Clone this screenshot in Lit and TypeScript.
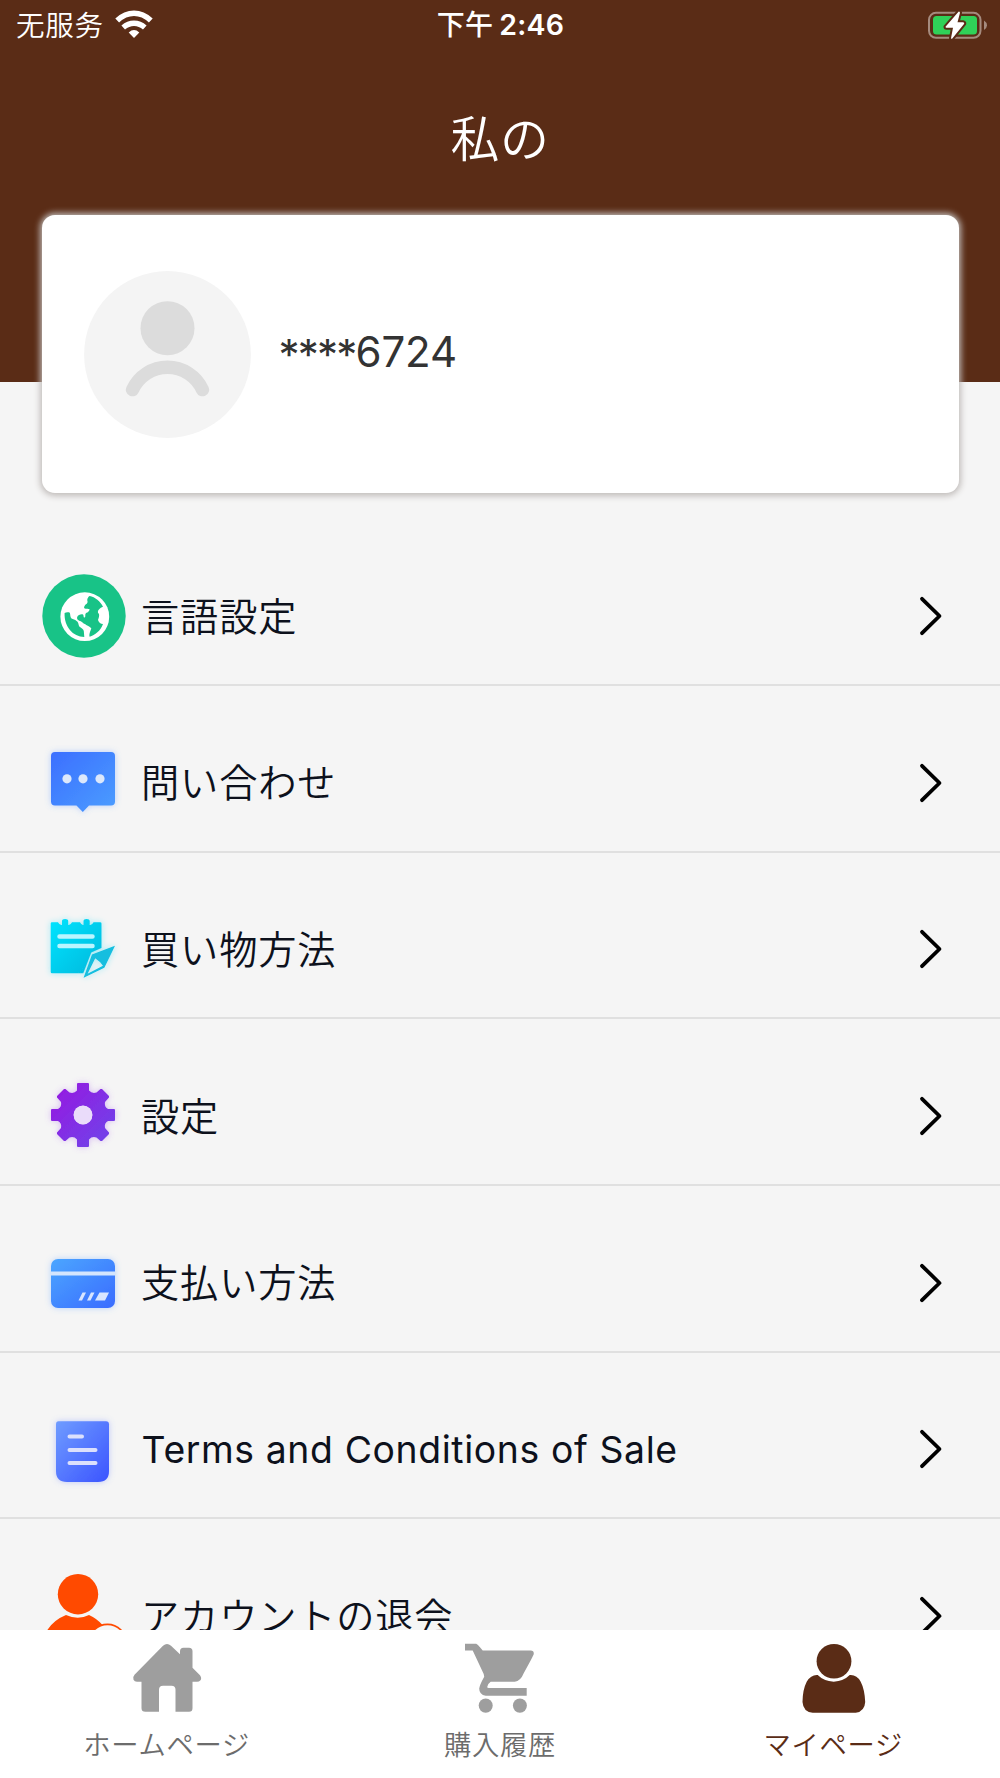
import { LitElement, html, css, svg } from "lit";
import { customElement, property } from "lit/decorators.js";

const glow = (id: string, color: string) => svg`
  <filter id=${id} x="-30%" y="-30%" width="160%" height="160%">
    <feDropShadow dx="0" dy="0" stdDeviation="3.2" flood-color=${color} flood-opacity="0.4"></feDropShadow>
  </filter>`;

const gradient = (id: string, from: string, to: string) => svg`
  <linearGradient id=${id} x1="0" y1="0" x2="1" y2="1">
    <stop offset="0" stop-color=${from}></stop>
    <stop offset="1" stop-color=${to}></stop>
  </linearGradient>`;

/* Row icons share an 84 x 84 box. */
const icons: Record<string, unknown> = {
  globe: svg`
    <circle cx="42" cy="42" r="41.700" fill="#18c387"></circle>
    <circle cx="42.800" cy="42.700" r="24.400" fill="#fff"></circle>
    <path fill="#18c387" d="M47.600 22 C53 23 58.500 27.500 61 32.700 C58 34 55.500 36 56 38.700 C58 40.500 57 43 56 46 C57 48.500 58.500 50 61 50 C58.500 57 53 61 47.600 62.700 C47 60 48 58.500 49.300 54.300 C47.500 52 45 52 43.300 50.300 C41 49.500 39.500 47 37.200 46.700 C35.500 46 34.600 44.500 35.200 43 C36 41 39 39.800 41 40.500 C42 41.500 41 44 42.800 43.500 C44 42.500 42.500 40.500 44 39 C46 38.500 47.500 37 47.600 35.300 C45.500 33.800 43.500 35.500 42.300 34.300 C41.500 33 43 31.500 43.600 30.500 C45.500 30 46 28 45.200 26 C45.500 24 46.500 22.500 47.600 22Z"></path>
    <path fill="#18c387" d="M22.600 39 C24 38.200 26.500 38 27.800 38.800 C28.500 41 28 43 29.500 44.500 C31 45.500 33 45.500 34.500 47 C37 48.500 36 50.500 37.600 52.700 C39.500 54 41.500 55 41.800 57 L42.300 63 C31 62.800 22 52.500 22.600 39Z"></path>`,
  chat: svg`
    <defs>${gradient("g-chat", "#3c6fff", "#4a9dff")}${glow("f-chat", "#5a92ff")}</defs>
    <path filter="url(#f-chat)" fill="url(#g-chat)" d="M13 11 H69 Q73 11 73 15 V60.500 Q73 64.500 69 64.500 H47 L40.800 71 L34.500 64.500 H13 Q9 64.500 9 60.500 V15 Q9 11 13 11Z"></path>
    <g fill="#dce8fb"><circle cx="25" cy="37.800" r="4.600"></circle><circle cx="41" cy="37.800" r="4.600"></circle><circle cx="58" cy="37.800" r="4.600"></circle></g>`,
  note: svg`
    <defs>${gradient("g-note", "#00e4ff", "#08b8dc")}${glow("f-note", "#20d8f5")}</defs>
    <g filter="url(#f-note)">
      <path fill="url(#g-note)" d="M10 15.300 H16 Q17.500 18.500 20 18 V14 Q20 12 23.100 12 Q26.200 12 26.200 14 V18 Q28.500 18.500 30 15.300 H38 Q39.500 18.500 41.500 18 V14 Q41.500 12 44.600 12 Q47.700 12 47.700 14 V18 Q50 18.500 51.500 15.300 H58.300 Q59.500 15.300 59.500 16.500 V41 L49.300 45.500 L41.300 66.300 H10 Q8.700 66.300 8.700 65 V16.500 Q8.700 15.300 10 15.300Z"></path>
      <path fill="#12bedf" fill-rule="evenodd" d="M73 38.700 L62.300 60.700 L41.600 70.700 L50 47.500Z M53.200 51.300 L53.200 51.300 L45.600 66.700 L61 58.800 L58 55Z"></path>
    </g>
    <path stroke="#baf5ff" stroke-width="4.500" stroke-linecap="round" d="M17.500 29.600 H50.500 M17.500 39 H50.500"></path>`,
  gear: svg`
    <defs>${gradient("g-gear", "#9817e0", "#6c46ea")}${glow("f-gear", "#a860ee")}</defs>
    <path filter="url(#f-gear)" fill="url(#g-gear)" fill-rule="evenodd" d="M36 9 H46 Q47 9 47 10 V16.500 Q50 20 54.500 18.500 L58.500 15 L60 15 L67 22 L67 23.500 L63 28 Q62 33 66 35 H72 Q73 35 73 36 V46 Q73 47 72 47 H66 Q62 49 63 54 L67 58.500 V60 L60 67 H58.500 L54.500 63.500 Q50 62 47 65.500 V72 Q47 73 46 73 H36 Q35 73 35 72 V65.500 Q32 62 27.500 63.500 L23.500 67 H22 L15 60 V58.500 L19 54 Q20 49 16 47 H10 Q9 47 9 46 V36 Q9 35 10 35 H16 Q20 33 19 28 L15 23.500 V22 L22 15 H23.500 L27.500 18.500 Q32 20 35 16.500 V10 Q35 9 36 9Z M41 31.700 A9.300 9.300 0 1 0 41 50.300 A9.300 9.300 0 1 0 41 31.700Z"></path>
    <circle cx="41" cy="41" r="9.400" fill="#eadcfa"></circle>`,
  card: svg`
    <defs>${gradient("g-card", "#4ba6ff", "#3a6cff")}${glow("f-card", "#5a9cff")}</defs>
    <rect filter="url(#f-card)" x="9" y="18" width="64" height="49" rx="7" fill="url(#g-card)"></rect>
    <rect x="9" y="30.500" width="64" height="4" fill="#d4e5fd"></rect>
    <path fill="#d8e5ff" d="M40.500 51.500 H44 L40 59.500 H36.500Z M49 51.500 H52.500 L48.500 59.500 H45Z M57.500 51.500 H67 L63 59.500 H53Z"></path>`,
  doc: svg`
    <defs>${gradient("g-doc", "#6f9cff", "#3b54ff")}${glow("f-doc", "#6680ff")}</defs>
    <path filter="url(#f-doc)" fill="url(#g-doc)" d="M16.500 14.200 H64 Q67 14.200 67 17.200 V64 Q67 75 56 75 H25 Q14 75 14 64 V17.200 Q14 14.200 16.500 14.200Z"></path>
    <path stroke="#dbe0fc" stroke-width="4" stroke-linecap="round" d="M27.500 29.600 H40 M27.500 43 H53.500 M27.500 56 H53.500"></path>`,
  leave: svg`
    <circle cx="36" cy="20.200" r="20.200" fill="#ff4a00"></circle>
    <path fill="#ff4a00" d="M2 62.500 Q8 47.500 24 41 Q36 46.500 47 41 Q55 44.500 61 51.500 L57 66 H2Z"></path>
    <circle cx="65.500" cy="69" r="18.700" fill="#f5f5f5" stroke="#ff4a00" stroke-width="1.700"></circle>`,
};

const rows = [
  { icon: "globe", label: "言語設定" },
  { icon: "chat", label: "問い合わせ" },
  { icon: "note", label: "買い物方法" },
  { icon: "gear", label: "設定" },
  { icon: "card", label: "支払い方法" },
  { icon: "doc", label: "Terms and Conditions of Sale", latin: true },
  { icon: "leave", label: "アカウントの退会" },
];

const tabs = [
  {
    label: "ホームページ",
    active: false,
    box: "0 1.7 76 74",
    icon: svg`<path d="M34 5.500 Q38 2 42 5.500 L51 14 V11 Q51 7.500 54.500 7.500 H60 Q63.500 7.500 63.500 11 V27.500 L71 35 Q73 38 71.500 40 Q70 41.500 68 41.500 H63.500 V68 Q63.500 71.500 60 71.500 H46.500 V49.500 Q46.500 45.500 42.500 45.500 H34 Q30 45.500 30 49.500 V71.500 H16.500 Q12.500 71.500 12.500 68 V41.500 H8 Q5.500 41.500 4.500 39.500 Q3.300 37 5.500 34.500Z"></path>`,
  },
  {
    label: "購入履歴",
    active: false,
    box: "0.3 1.5 76 82",
    icon: svg`<path fill-rule="evenodd" d="M3.300 3.500 H14.500 Q16 4 18.500 7.500 L21 11 H69 Q72.500 11 72 15 Q71.500 17 62 36 Q59 44.500 53 45.500 H29 Q26 47.500 25.500 51.500 Q25.500 52.600 27 52.600 H65 V61 H24 Q17.500 60 17.500 53 Q18 49 22.500 40 L22 37 L11 11 H3.300Z"></path><ellipse cx="24" cy="72" rx="7" ry="8"></ellipse><ellipse cx="58.200" cy="72" rx="7" ry="8"></ellipse>`,
  },
  {
    label: "マイページ",
    active: true,
    box: "-0.7 1.5 76 82",
    icon: svg`<ellipse cx="38.300" cy="22.800" rx="17.400" ry="19.200"></ellipse><path d="M22 38.200 Q28 45 38 45.500 Q48 45 54 38.200 Q61 37.500 65 45.500 Q69 54 69.500 68 Q69 78.500 60 80 H17 Q7.500 79 6.800 68 Q7 54 11 45.500 Q15.500 37.500 22 38.200Z"></path>`,
  },
];

@customElement("status-bar")
export class StatusBar extends LitElement {
  static styles = css`
    :host { display: grid; grid-template-columns: 1fr auto 1fr; align-items: center; height: 50px; padding: 0 13px 0 16px; color: #fff; font: 400 28px/50px Inter, "Noto Sans CJK SC", sans-serif; }
    .carrier { display: flex; align-items: center; gap: 11px; }
    .carrier-name { font-size: 28.600px; font-weight: 350; letter-spacing: 0.700px; }
    .wifi { width: 38px; height: 28px; margin-bottom: 3px; fill: none; stroke: #fff; }
    .time { display: flex; gap: 6px; margin: 0 2px 1px 0; font-size: 28.500px; font-weight: 600; letter-spacing: 0.200px; }
    .period { font-size: 28px; font-weight: 500; }
    .battery { justify-self: end; width: 60px; height: 30px; }
  `;
  render() {
    return html`
      <div class="carrier">
        <span class="carrier-name">无服务</span>
        <svg class="wifi" viewBox="0 0 38 28">
          <path stroke-width="5.600" d="M2.200 10.500 Q10 3.300 19 3.300 Q28 3.300 35.800 10.500"></path>
          <path stroke-width="5.400" d="M8.200 17.500 Q13 13.200 19 13.200 Q25 13.200 29.800 17.500"></path>
          <path fill="#fff" stroke="none" d="M13.700 22.500 Q19 17.700 24.300 22.500 L19 28Z"></path>
        </svg>
      </div>
      <div class="time"><span class="period">下午</span><span>2:46</span></div>
      <svg class="battery" viewBox="0 0 60 30">
        <rect x="2" y="1.800" width="51.500" height="25" rx="7" fill="none" stroke="#a58b7e" stroke-width="2"></rect>
        <path fill="#a58b7e" d="M57 9.600 Q60 11.600 60 14.300 Q60 17.100 57 19.100Z"></path>
        <rect x="6" y="5.100" width="44" height="18.300" rx="3.500" fill="#30d158"></rect>
        <path fill="#fff" stroke="#5a2c16" stroke-width="4" stroke-linejoin="round" paint-order="stroke" d="M31.500 .7 L18.500 15.700 Q18.500 16.700 19.500 16.700 H26 L24 27.200 Q24.500 28.200 25.500 27.200 L37.200 12.700 Q37.500 11.400 36 11.200 H30.500 L33 1.700 Q32.500 .2 31.500 .7Z"></path>
      </svg>`;
  }
}

@customElement("profile-card")
export class ProfileCard extends LitElement {
  @property() mask = "";
  @property() digits = "";
  static styles = css`
    :host { display: flex; align-items: center; gap: 28px; height: 278px; margin: 0 41.500px; padding-left: 42px; box-sizing: border-box; border-radius: 13px; background: #fff; box-shadow: 0 0.500px 6px 2px #c0bcba; }
    .avatar { width: 167px; height: 167px; }
    .name { padding-bottom: 1px; color: #333; font: 400 42px/60px Inter, sans-serif; letter-spacing: -0.100px; }
    .mask { letter-spacing: -1.800px; vertical-align: -3px; }
  `;
  render() {
    return html`
      <svg class="avatar" viewBox="0 0 167 167">
        <circle cx="83.500" cy="83.500" r="83.400" fill="#f4f4f4"></circle>
        <circle cx="83.500" cy="57.200" r="27" fill="#dcdcdc"></circle>
        <path fill="none" stroke="#dcdcdc" stroke-width="13.300" stroke-linecap="round" d="M48.500 118.700 A38.500 38.500 0 0 1 118.500 118.700"></path>
      </svg>
      <span class="name"><span class="mask">${this.mask}</span>${this.digits}</span>`;
  }
}

@customElement("menu-row")
export class MenuRow extends LitElement {
  @property() icon = "";
  @property() label = "";
  @property({ type: Boolean }) latin = false;
  static styles = css`
    :host { display: flex; align-items: center; box-sizing: border-box; height: 166.670px; padding: 28.700px 57px 0 41.700px; border-bottom: 2px solid #e0e0e0; }
    .icon { width: 84px; height: 84px; overflow: visible; flex: none; }
    .label { flex: 1; margin-left: 15.400px; padding-bottom: 2.500px; color: #0d111c; font: 350 38.200px/56px "Noto Sans CJK JP", sans-serif; letter-spacing: 0.850px; white-space: nowrap; }
    .latin { margin-left: 15.900px; padding: 2px 0 0; font-family: Inter, sans-serif; font-size: 37.330px; font-weight: 400; letter-spacing: 0.620px; }
    .chevron { width: 26px; height: 42px; fill: none; stroke: #000; stroke-width: 3.800; stroke-linecap: round; stroke-linejoin: round; }
  `;
  render() {
    return html`
      <svg class="icon" viewBox="0 0 84 84">${icons[this.icon]}</svg>
      <span class="label ${this.latin ? "latin" : ""}">${this.label}</span>
      <svg class="chevron" viewBox="0 0 26 42"><path d="M5 3.800 L22.500 21 L5 38.200"></path></svg>`;
  }
}

@customElement("tab-bar")
export class TabBar extends LitElement {
  static styles = css`
    :host { display: grid; grid-template-columns: repeat(3, 1fr); height: 148px; background: #fff; }
    .tab { display: flex; flex-direction: column; align-items: center; padding-top: 12px; color: #6c6c6c; }
    .glyph { width: 76px; height: 74px; fill: #9e9e9e; }
    .caption { margin-top: 7px; font: 350 27.300px/40px "Noto Sans CJK JP", sans-serif; letter-spacing: 0.700px; }
    .active { color: #5a2c16; }
    .active .glyph { fill: #5a2c16; }
  `;
  render() {
    return tabs.map(
      (t) => html`<div class="tab ${t.active ? "active" : ""}">
        <svg class="glyph" viewBox=${t.box} preserveAspectRatio="none">${t.icon}</svg>
        <span class="caption">${t.label}</span>
      </div>`
    );
  }
}

@customElement("app-root")
export class AppRoot extends LitElement {
  static styles = css`
    :host { display: flex; flex-direction: column; width: 1000px; height: 1778px; overflow: hidden; background: #f5f5f5; }
    .top { flex: none; height: 519.300px; background: linear-gradient(#5a2c16 381.700px, #f5f5f5 381.700px); }
    .title { margin: 0; height: 165px; color: #fff; text-align: center; font: 350 49px/171px "Noto Sans CJK JP", sans-serif; letter-spacing: 0.500px; }
    .list { flex: 1; min-height: 0; overflow: hidden; }
    tab-bar { flex: none; }
  `;
  render() {
    return html`
      <header class="top">
        <status-bar></status-bar>
        <h1 class="title">私の</h1>
        <profile-card mask="****" digits="6724"></profile-card>
      </header>
      <main class="list">
        ${rows.map((r) => html`<menu-row .icon=${r.icon} .label=${r.label} .latin=${!!r.latin}></menu-row>`)}
      </main>
      <tab-bar></tab-bar>`;
  }
}
